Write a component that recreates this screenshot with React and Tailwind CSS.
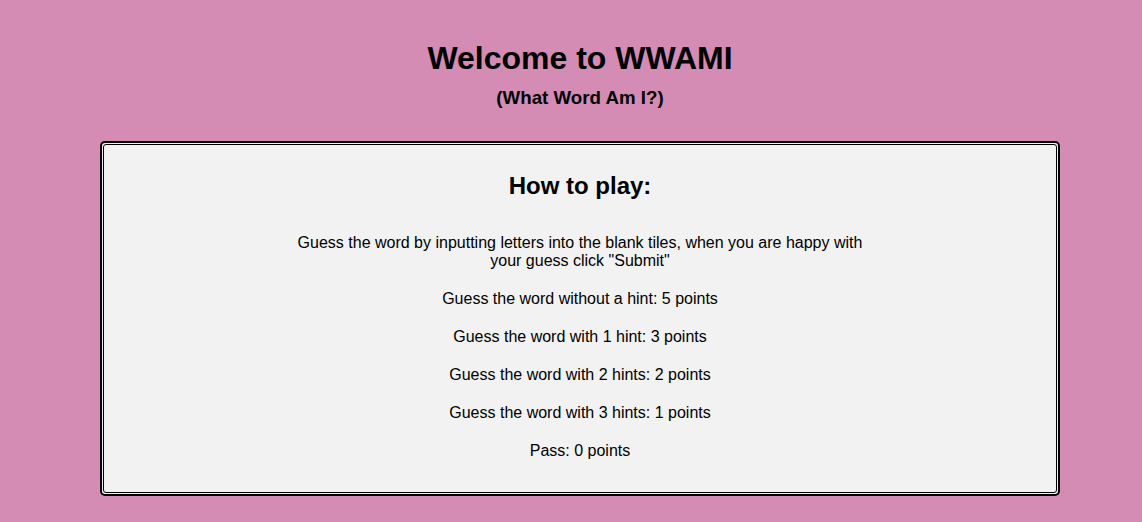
export default function App() {
  const reglas = [
    'Guess the word without a hint: 5 points',
    'Guess the word with 1 hint: 3 points',
    'Guess the word with 2 hints: 2 points',
    'Guess the word with 3 hints: 1 points',
    'Pass: 0 points',
  ]

  return (
    <div className="min-h-screen bg-[#d48bb4] overflow-hidden font-['Liberation_Sans',Arial,sans-serif] text-black">
      <div className="w-[1160px] flex flex-col items-center">
        <h1 className="mt-[40px] text-[32px] leading-[37px] font-bold">Welcome to WWAMI</h1>
        <h2 className="mt-[10px] text-[18.72px] leading-[22px] font-bold">(What Word Am I?)</h2>

        {/* caja de instrucciones con borde doble */}
        <div className="mt-[32px] w-[960px] border-2 border-black rounded-[5px] p-px bg-[#f2f2f2]">
          <div className="border border-black rounded-[3px] bg-[#f2f2f2] flex flex-col items-center pt-[27px] pb-[32px]">
            <h3 className="text-[24px] leading-[28px] font-bold">How to play:</h3>
            <p className="mt-[34px] w-[576px] text-center text-[16px] leading-[18px]">
              Guess the word by inputting letters into the blank tiles, when you are happy with your guess click "Submit"
            </p>
            {reglas.map((r) => (
              <p key={r} className="mt-[20px] text-center text-[16px] leading-[18px]">{r}</p>
            ))}
          </div>
        </div>
      </div>
    </div>
  )
}
